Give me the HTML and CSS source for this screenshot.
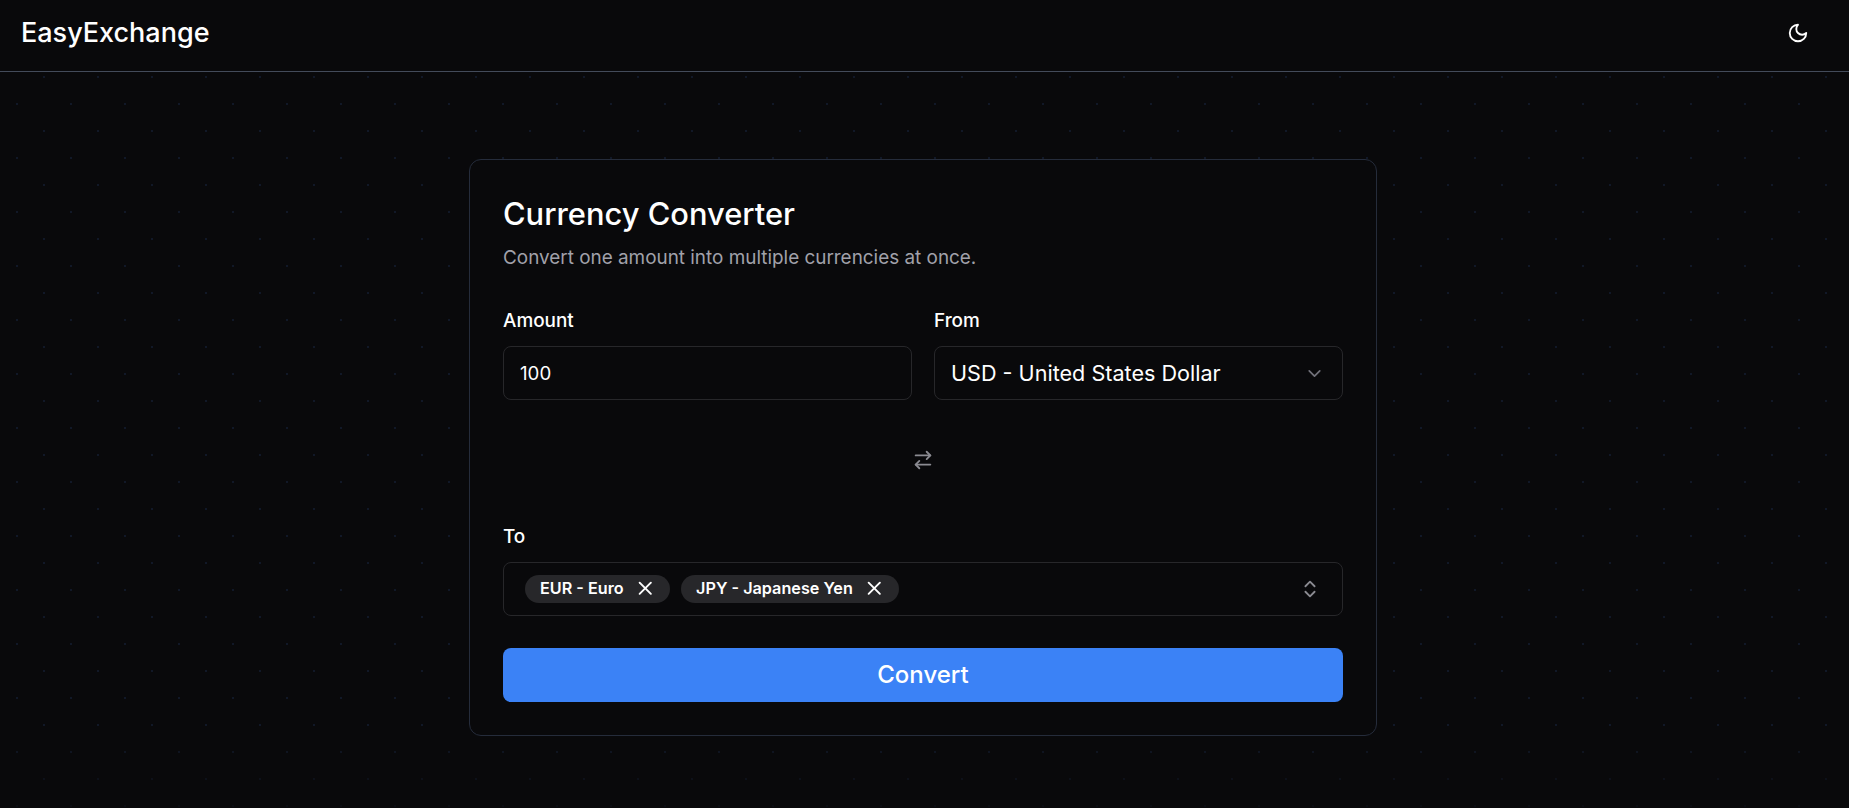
FILE: index.html
```html
<!DOCTYPE html>
<html lang="en">
<head>
<meta charset="utf-8">
<title>EasyExchange</title>
<link rel="stylesheet" href="styles.css">
</head>
<body>
<header class="topbar">
  <span class="brand">EasyExchange</span>
  <button class="theme-btn" type="button" aria-label="Toggle theme">
    <svg class="icon-moon" viewBox="0 0 24 24" fill="none" stroke="currentColor" stroke-width="2" stroke-linecap="round" stroke-linejoin="round"><path d="M12 3a6 6 0 0 0 9 9 9 9 0 1 1-9-9Z"/></svg>
  </button>
</header>
<main class="page">
  <section class="card">
    <h1 class="title">Currency Converter</h1>
    <p class="subtitle">Convert one amount into multiple currencies at once.</p>
    <div class="row">
      <div class="field">
        <label class="label">Amount</label>
        <div class="control amount">100</div>
      </div>
      <div class="field">
        <label class="label">From</label>
        <div class="control select">
          <span>USD - United States Dollar</span>
          <svg class="icon-chev" viewBox="0 0 24 24" fill="none" stroke="currentColor" stroke-width="2" stroke-linecap="round" stroke-linejoin="round"><path d="m6 9 6 6 6-6"/></svg>
        </div>
      </div>
    </div>
    <div class="swap">
      <svg class="icon-swap" viewBox="0 0 24 24" fill="none" stroke="currentColor" stroke-width="2" stroke-linecap="round" stroke-linejoin="round"><path d="m16 3 4 4-4 4"/><path d="M20 7H4"/><path d="m8 21-4-4 4-4"/><path d="M4 17h16"/></svg>
    </div>
    <div class="field">
      <label class="label">To</label>
      <div class="control multi">
        <div class="chips">
          <span class="chip"><span class="chip-text">EUR - Euro</span><svg class="icon-x" viewBox="0 0 24 24" fill="none" stroke="currentColor" stroke-width="2" stroke-linecap="round" stroke-linejoin="round"><path d="M18 6 6 18"/><path d="m6 6 12 12"/></svg></span>
          <span class="chip"><span class="chip-text">JPY - Japanese Yen</span><svg class="icon-x" viewBox="0 0 24 24" fill="none" stroke="currentColor" stroke-width="2" stroke-linecap="round" stroke-linejoin="round"><path d="M18 6 6 18"/><path d="m6 6 12 12"/></svg></span>
        </div>
        <svg class="icon-updown" viewBox="0 0 24 24" fill="none" stroke="currentColor" stroke-width="2" stroke-linecap="round" stroke-linejoin="round"><path d="m7 15 5 5 5-5"/><path d="m7 9 5-5 5 5"/></svg>
      </div>
    </div>
    <button class="convert" type="button">Convert</button>
  </section>
</main>
</body>
</html>
```
FILE: styles.css
```css
* { box-sizing: border-box; }
html, body { height: 100%; }
body {
  margin: 0;
  overflow: hidden;
  color: #fff;
  font-family: Inter, "Liberation Sans", sans-serif;
  background-color: #09090b;
  background-image:
    linear-gradient(to bottom, rgba(9, 9, 11, 0) 90%, rgba(9, 9, 11, 0.75) 100%),
    radial-gradient(circle at 44px 23px, #111827 0, #111827 1px, transparent 1.05px),
    radial-gradient(circle at 17px 50px, #111827 0, #111827 1px, transparent 1.05px);
  background-size: 100% 100%, 54px 54px, 54px 54px;
}
.topbar {
  height: 72px;
  padding: 0 31px 0 21px;
  display: flex;
  align-items: center;
  justify-content: space-between;
  background: #09090b;
  border-bottom: 1px solid #434b5a;
}
.brand { font-size: 27px; font-weight: 500; line-height: 36px; margin-top: -6px; }
.theme-btn {
  width: 40px; height: 40px; padding: 0;
  display: flex; align-items: center; justify-content: center;
  background: none; border: 0; color: #fff;
  margin-top: -6px;
}
.icon-moon { width: 22px; height: 22px; }
.page { display: flex; justify-content: center; padding: 87px 3px 0 0; }
.card {
  width: 908px;
  padding: 33px;
  background: #09090b;
  border: 1px solid #252c3b;
  border-radius: 12px;
}
.title { margin: 1px 0 0; font-size: 30.85px; line-height: 40px; font-weight: 500; }
.subtitle { margin: 10px 0 0; font-size: 18.9px; line-height: 27px; color: #a1a1aa; }
.row { display: grid; grid-template-columns: 1fr 1fr; gap: 22px; margin-top: 36px; }
.field { display: flex; flex-direction: column; }
.label { font-size: 18.9px; line-height: 27px; font-weight: 500; margin-bottom: 12px; }
.control {
  height: 54px;
  border: 1px solid #27272a;
  border-radius: 8px;
  display: flex;
  align-items: center;
  padding: 0 16px;
}
.amount { font-size: 18.7px; }
.select { justify-content: space-between; font-size: 21.6px; }
.icon-chev { width: 21px; height: 21px; color: #71717a; margin-right: 1px; }
.swap { height: 123px; padding-bottom: 4px; display: flex; align-items: center; justify-content: center; color: #8b8b92; }
.icon-swap { width: 22px; height: 22px; }
.multi { justify-content: space-between; padding: 0 21px; }
.chips { display: flex; gap: 11px; }
.chip {
  height: 28px;
  display: inline-flex; align-items: center; gap: 10px;
  padding: 0 14px 1px 15px;
  background: #27272a;
  border-radius: 14px;
  font-size: 16.2px;
  font-weight: 600;
}
.chip-text { margin-bottom: 1px; }
.icon-x { width: 22.5px; height: 22.5px; }
.icon-updown { width: 22px; height: 22px; color: #8b8b92; }
.convert {
  display: block;
  width: 100%;
  height: 54px;
  margin-top: 32px;
  padding: 0 0 2px;
  border: 0;
  border-radius: 8px;
  background: #3b82f6;
  color: #fff;
  font: 500 24px Inter, "Liberation Sans", sans-serif;
}
```
